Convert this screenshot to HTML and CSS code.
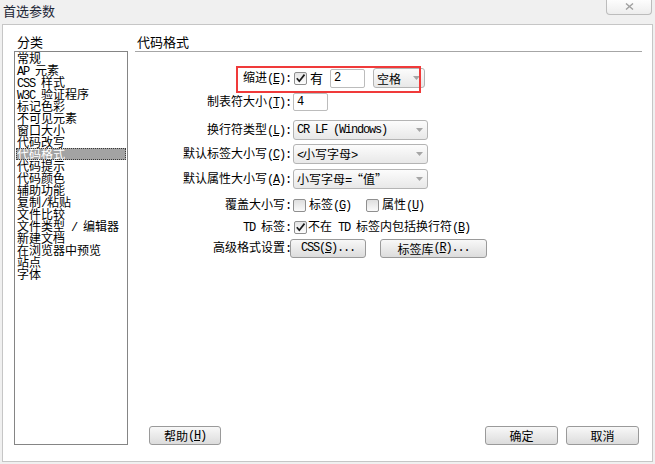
FILE: index.html
```html
<!DOCTYPE html>
<html lang="zh">
<head>
<meta charset="utf-8">
<title>首选参数</title>
<link rel="stylesheet" href="styles.css">
</head>
<body>
<div class="titlebar">
  <div class="title">首选参数</div>
  <div class="close"><svg width="9" height="7" viewBox="0 0 9 7"><path d="M1 0.5 L8 6.5 M8 0.5 L1 6.5" stroke="#a0a0a0" stroke-width="1.4" fill="none"/></svg></div>
</div>
<div class="panel">
  <div class="leftcol">
    <div class="grouplabel">分类</div>
    <div class="list">
      <div class="item">常规</div>
      <div class="item"><span class="lat">AP&nbsp;</span>元素</div>
      <div class="item"><span class="lat">CSS&nbsp;</span>样式</div>
      <div class="item"><span class="lat">W3C&nbsp;</span>验证程序</div>
      <div class="item">标记色彩</div>
      <div class="item">不可见元素</div>
      <div class="item">窗口大小</div>
      <div class="item">代码改写</div>
      <div class="item selected">代码格式</div>
      <div class="item">代码提示</div>
      <div class="item">代码颜色</div>
      <div class="item">辅助功能</div>
      <div class="item">复制<span class="lat">/</span>粘贴</div>
      <div class="item">文件比较</div>
      <div class="item">文件类型<span class="lat">&nbsp;/&nbsp;</span>编辑器</div>
      <div class="item">新建文档</div>
      <div class="item">在浏览器中预览</div>
      <div class="item">站点</div>
      <div class="item">字体</div>
    </div>
  </div>
  <div class="rightcol">
    <div class="header">代码格式</div>
    <div class="form">
      <div class="row r1">
        <div class="lbl">缩进<span class="lat">(<u>E</u>):</span></div>
        <div class="ctl">
          <span class="cb checked cb-in"><svg width="11" height="11" viewBox="0 0 11 11"><path d="M1.8 5.2 L4.3 8.2 L9.5 1.6" stroke="#1a1a1a" stroke-width="1.7" fill="none"/></svg></span>
          <span class="cbtext big">有</span>
          <span class="txt w35 gap7"><span class="lat">2</span></span>
          <span class="sel w52 gap8"><span>空格</span><svg class="arr" width="7" height="4" viewBox="0 0 7 4"><polygon points="0,0 7,0 3.5,4" fill="#a6a6a6"/></svg></span>
        </div>
      </div>
      <div class="row r2">
        <div class="lbl">制表符大小<span class="lat">(<u>T</u>):</span></div>
        <div class="ctl"><span class="txt w35 short"><span class="lat">4</span></span></div>
      </div>
      <div class="row r3">
        <div class="lbl">换行符类型<span class="lat">(<u>L</u>):</span></div>
        <div class="ctl"><span class="sel w135"><span class="lat">CR LF (Windows)</span><svg class="arr" width="7" height="4" viewBox="0 0 7 4"><polygon points="0,0 7,0 3.5,4" fill="#a6a6a6"/></svg></span></div>
      </div>
      <div class="row r4">
        <div class="lbl">默认标签大小写<span class="lat">(<u>C</u>):</span></div>
        <div class="ctl"><span class="sel w135"><span><span class="lat">&lt;</span>小写字母<span class="lat">&gt;</span></span><svg class="arr" width="7" height="4" viewBox="0 0 7 4"><polygon points="0,0 7,0 3.5,4" fill="#a6a6a6"/></svg></span></div>
      </div>
      <div class="row r5">
        <div class="lbl">默认属性大小写<span class="lat">(<u>A</u>):</span></div>
        <div class="ctl"><span class="sel w135"><span>小写字母<span class="lat">=</span>“值”</span><svg class="arr" width="7" height="4" viewBox="0 0 7 4"><polygon points="0,0 7,0 3.5,4" fill="#a6a6a6"/></svg></span></div>
      </div>
      <div class="row r6">
        <div class="lbl">覆盖大小写<span class="lat">:</span></div>
        <div class="ctl">
          <span class="cb"></span>
          <span class="cbtext">标签<span class="lat">(<u>G</u>)</span></span>
          <span class="cb gap15"></span>
          <span class="cbtext">属性<span class="lat">(<u>U</u>)</span></span>
        </div>
      </div>
      <div class="row r7">
        <div class="lbl"><span class="lat">TD&nbsp;</span>标签<span class="lat">:</span></div>
        <div class="ctl">
          <span class="cb checked cb-in"><svg width="11" height="11" viewBox="0 0 11 11"><path d="M1.8 5.2 L4.3 8.2 L9.5 1.6" stroke="#1a1a1a" stroke-width="1.7" fill="none"/></svg></span>
          <span class="cbtext tight">不在<span class="lat">&nbsp;TD&nbsp;</span>标签内包括换行符<span class="lat">(<u>B</u>)</span></span>
        </div>
      </div>
      <div class="row r8">
        <div class="lbl">高级格式设置<span class="lat">:</span></div>
        <div class="ctl">
          <span class="btn w76 first"><span class="lat">CSS(<u>S</u>)...</span></span>
          <span class="btn w107 gap14">标签库<span class="lat">(<u>R</u>)...</span></span>
        </div>
      </div>
    </div>
    <div class="footer">
      <span class="btn w72 help">帮助<span class="lat">(<u>H</u>)</span></span>
      <span class="spacer"></span>
      <span class="btn w73">确定</span>
      <span class="btn w73 gap8">取消</span>
    </div>
  </div>
</div>
<div class="redbox"></div>
</body>
</html>
```

FILE: styles.css
```css
* { box-sizing: border-box; }

body {
  margin: 0;
  width: 655px;
  height: 464px;
  overflow: hidden;
  position: relative;
  background: #f0f0f0;
  font-family: "Noto Sans CJK SC", "Noto Sans", sans-serif;
  font-size: 12px;
  color: #000;
}

u { text-decoration: underline; text-underline-offset: 1px; }

.lat {
  font-family: "Liberation Mono", monospace;
  font-size: 12px;
  letter-spacing: -1.2px;
}

.titlebar {
  height: 24px;
  display: flex;
  justify-content: space-between;
  align-items: flex-start;
}

.title {
  padding: 1px 0 0 3px;
  font-size: 13px;
  line-height: 19px;
  color: #1c2535;
}

.close {
  width: 46px;
  height: 15px;
  margin-right: 3px;
  border: 1px solid #bcbcbc;
  border-top: none;
  border-radius: 0 0 4px 4px;
  background: linear-gradient(#fdfdfd, #ededed);
  display: flex;
  align-items: center;
  justify-content: center;
  padding-bottom: 2px;
}

.panel {
  margin-left: 2px;
  width: 651px;
  height: 438px;
  border: 1px solid #c6c6c6;
  background: #fff;
  display: flex;
  padding: 9px 10px 16px 11px;
}

.leftcol {
  width: 114px;
  display: flex;
  flex-direction: column;
}

.grouplabel {
  height: 17px;
  padding-left: 3px;
  font-size: 13px;
  line-height: 16px;
}

.list {
  flex: 1;
  border: 1px solid #858585;
  background: #fff;
}

.item {
  height: 12px;
  line-height: 12px;
  margin: 0 1px;
  padding-left: 1px;
  white-space: nowrap;
}

.item.selected {
  background: #a3a3a3;
  color: #fff;
  outline: 1px dotted #3a3a3a;
  outline-offset: -1px;
}

.rightcol {
  margin-left: 7px;
  flex: 1;
  display: flex;
  flex-direction: column;
}

.header {
  height: 18px;
  padding-left: 2px;
  border-bottom: 1px solid #a6a6a6;
  font-size: 13px;
  line-height: 16px;
}

.form {
  margin-top: 16px;
  display: flex;
  flex-direction: column;
}

.row {
  height: 20px;
  display: flex;
  align-items: center;
}

.r2 { margin-top: 4px; }
.r3 { margin-top: 8px; }
.r4 { margin-top: 4px; }
.r5 { margin-top: 5px; }
.r6 { margin-top: 6px; }
.r7 { margin-top: 2px; }
.r8 { margin-top: 1px; }

.lbl {
  width: 156px;
  text-align: right;
  padding-right: 0;
  white-space: nowrap;
  line-height: 20px;
}

.ctl {
  display: flex;
  align-items: center;
  padding-left: 2px;
  white-space: nowrap;
}

.cb {
  width: 13px;
  height: 13px;
  border: 1px solid #8f8f8f;
  border-radius: 2px;
  background: linear-gradient(#dedede, #fafafa);
  display: flex;
  align-items: center;
  justify-content: center;
}

.cb.checked { background: linear-gradient(#e4e4e4, #fdfdfd); }
.cb-in { margin-left: 1px; }

.cbtext { margin-left: 3px; line-height: 20px; }
.cbtext.big { font-size: 13px; }
.cbtext.tight { margin-left: 1px; }

.txt {
  height: 19px;
  border: 1px solid #bcbcbc;
  border-radius: 2px;
  background: #fff;
  padding-left: 3px;
  display: flex;
  align-items: center;
}

.txt.short { height: 18px; }

.w35 { width: 35px; }
.gap7 { margin-left: 7px; }
.gap8 { margin-left: 8px; }
.gap14 { margin-left: 14px; }
.gap15 { margin-left: 15px; }

.sel {
  height: 20px;
  border: 1px solid #b4b4b4;
  border-radius: 3px;
  background: linear-gradient(#fcfcfc, #e8e8e8);
  display: flex;
  align-items: center;
  justify-content: space-between;
  padding: 0 4px 0 3px;
}

.w52 { width: 52px; }
.w135 { width: 135px; }
.w72 { width: 72px; }
.w73 { width: 73px; }
.w76 { width: 76px; }
.w107 { width: 107px; }

.arr { flex: none; }

.btn {
  height: 19px;
  border: 1px solid #9a9a9a;
  border-radius: 3px;
  background: linear-gradient(#f8f8f8, #dcdcdc);
  display: flex;
  align-items: center;
  justify-content: center;
  white-space: nowrap;
}

.btn.first { margin-left: -3px; }

.footer {
  margin-top: auto;
  height: 20px;
  display: flex;
  align-items: flex-end;
  padding-right: 3px;
}

.help { margin-left: 14px; }
.spacer { flex: 1; }

.redbox {
  position: absolute;
  left: 236px;
  top: 66px;
  width: 185px;
  height: 27px;
  border: 2px solid #f03a3a;
}
```
